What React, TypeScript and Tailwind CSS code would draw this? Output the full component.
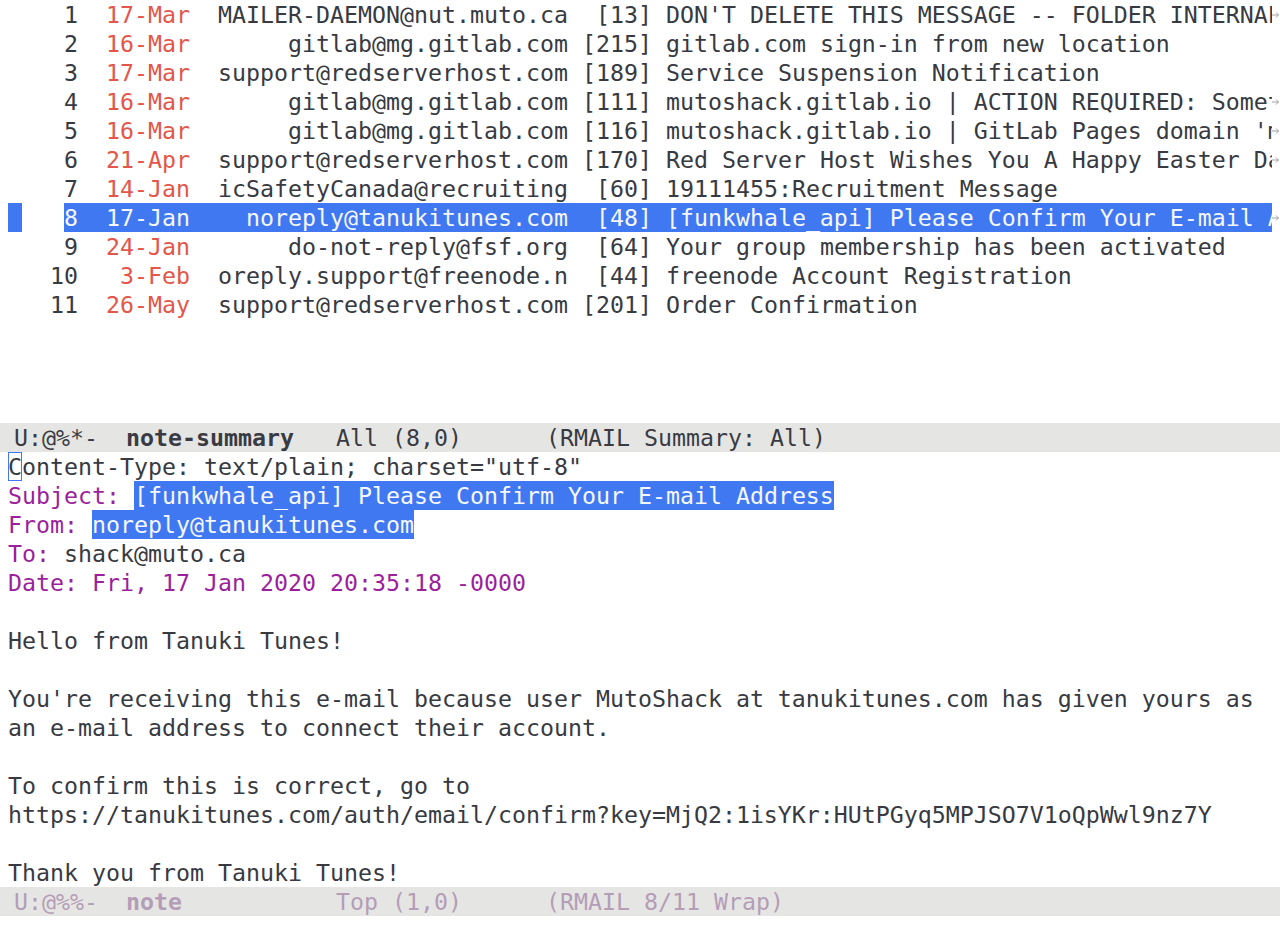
import type { ReactNode } from "react";

interface SummaryEntry {
  n: number;
  date: string;
  from: string;
  size: number;
  subject: string;
}

const entries: SummaryEntry[] = [
  { n: 1, date: "17-Mar", from: "MAILER-DAEMON@nut.muto.ca", size: 13, subject: "DON'T DELETE THIS MESSAGE -- FOLDER INTERNAL DATA" },
  { n: 2, date: "16-Mar", from: "gitlab@mg.gitlab.com", size: 215, subject: "gitlab.com sign-in from new location" },
  { n: 3, date: "17-Mar", from: "support@redserverhost.com", size: 189, subject: "Service Suspension Notification" },
  { n: 4, date: "16-Mar", from: "gitlab@mg.gitlab.com", size: 111, subject: "mutoshack.gitlab.io | ACTION REQUIRED: Something went wrong" },
  { n: 5, date: "16-Mar", from: "gitlab@mg.gitlab.com", size: 116, subject: "mutoshack.gitlab.io | GitLab Pages domain 'mutoshack.gitlab.io' was not verified" },
  { n: 6, date: "21-Apr", from: "support@redserverhost.com", size: 170, subject: "Red Server Host Wishes You A Happy Easter Day!" },
  { n: 7, date: "14-Jan", from: "icSafetyCanada@recruiting", size: 60, subject: "19111455:Recruitment Message" },
  { n: 8, date: "17-Jan", from: "noreply@tanukitunes.com", size: 48, subject: "[funkwhale_api] Please Confirm Your E-mail Address" },
  { n: 9, date: "24-Jan", from: "do-not-reply@fsf.org", size: 64, subject: "Your group membership has been activated" },
  { n: 10, date: "3-Feb", from: "oreply.support@freenode.n", size: 44, subject: "freenode Account Registration" },
  { n: 11, date: "26-May", from: "support@redserverhost.com", size: 201, subject: "Order Confirmation" },
];

const CURRENT = 8;
const COLS = 90;

// rmail summary line: "    N  DD-Mon  sender(25) [size] subject"
function formatLine(e: SummaryEntry) {
  return `${String(e.n).padStart(5)}  ${e.date.padStart(6)}  ${e.from.padStart(25)} ${`[${e.size}]`.padStart(5)} ${e.subject}`;
}

function ContinuationArrow() {
  return (
    <svg width="8" height="8" viewBox="0 0 8 8" className="text-[#a0a2a6]">
      <path d="M0 4h6.5M4 1.5L6.5 4 4 6.5" fill="none" stroke="currentColor" strokeWidth="1" />
    </svg>
  );
}

function SummaryRow({ entry }: { entry: SummaryEntry }) {
  const line = formatLine(entry);
  const truncated = line.length > COLS;
  const current = entry.n === CURRENT;

  return (
    <div className="flex h-[29px]">
      <div className="w-[8px] shrink-0" />
      <div className="flex w-[1264px] shrink-0 overflow-hidden whitespace-pre">
        {current ? (
          <>
            <span className="w-[14px] shrink-0 bg-[#4078f2]" />
            <span className="w-[42px] shrink-0" />
            <span className="flex-1 bg-[#4078f2] text-[#f4f7ff]">{line.slice(4)}</span>
          </>
        ) : (
          <>
            <span>{line.slice(0, 7)}</span>
            <span className="text-[#e45649]">{line.slice(7, 13)}</span>
            <span>{line.slice(13)}</span>
          </>
        )}
      </div>
      <div className="flex w-[8px] shrink-0 items-center">{truncated && <ContinuationArrow />}</div>
    </div>
  );
}

function ModeLine({ active, status, buffer, position, mode }: { active: boolean; status: string; buffer: string; position: string; mode: string }) {
  return (
    <div
      className={`h-[29px] whitespace-pre bg-[#e5e6e4] pl-[14px] ${active ? "text-[#3a3b42]" : "text-[#b59db7]"}`}
    >
      {status}
      {"  "}
      <span className="font-bold">{buffer.padEnd(15)}</span>
      {position.padEnd(15)}
      {mode}
    </div>
  );
}

const Label = ({ children }: { children: ReactNode }) => <span className="text-[#9c1f9c]">{children}</span>;
const Hl = ({ children }: { children: ReactNode }) => (
  <span className="inline-block bg-[#4078f2] text-[#f4f7ff]">{children}</span>
);

const bodyLines: ReactNode[] = [
  <>
    <span className="inline-block w-[14px] outline outline-[#4078f2] -outline-offset-1">C</span>
    {'ontent-Type: text/plain; charset="utf-8"'}
  </>,
  <>
    <Label>Subject: </Label>
    <Hl>[funkwhale_api] Please Confirm Your E-mail Address</Hl>
  </>,
  <>
    <Label>From: </Label>
    <Hl>noreply@tanukitunes.com</Hl>
  </>,
  <>
    <Label>To: </Label>shack@muto.ca
  </>,
  <Label>Date: Fri, 17 Jan 2020 20:35:18 -0000</Label>,
  "",
  "Hello from Tanuki Tunes!",
  "",
  "You're receiving this e-mail because user MutoShack at tanukitunes.com has given yours as",
  "an e-mail address to connect their account.",
  "",
  "To confirm this is correct, go to",
  "https://tanukitunes.com/auth/email/confirm?key=MjQ2:1isYKr:HUtPGyq5MPJSO7V1oQpWwl9nz7Y",
  "",
  "Thank you from Tanuki Tunes!",
];

export default function App() {
  return (
    <div className="h-[945px] w-[1280px] overflow-hidden bg-white font-['DejaVu_Sans_Mono',monospace] text-[23.25px] leading-[29px] text-[#383a42]">
      {/* summary window */}
      <section className="h-[423px]">
        {entries.map((e) => (
          <SummaryRow key={e.n} entry={e} />
        ))}
      </section>
      <ModeLine active status="U:@%*-" buffer="note-summary" position="All (8,0)" mode="(RMAIL Summary: All)" />

      {/* message window */}
      <section className="h-[435px] px-[8px]">
        {bodyLines.map((l, i) => (
          <div key={i} className="h-[29px] whitespace-pre">
            {l}
          </div>
        ))}
      </section>
      <ModeLine active={false} status="U:@%%-" buffer="note" position="Top (1,0)" mode="(RMAIL 8/11 Wrap)" />

      {/* echo area */}
      <div className="h-[29px]" />
    </div>
  );
}
